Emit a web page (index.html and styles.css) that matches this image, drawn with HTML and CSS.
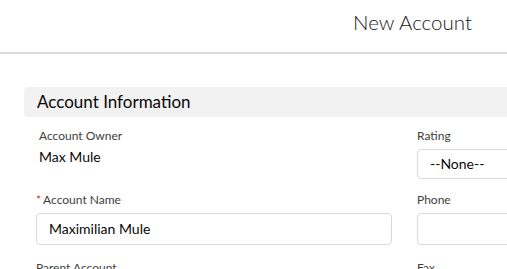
FILE: index.html
```html
<!DOCTYPE HTML>
<html>
    <head>
        <link rel="stylesheet" href="styles.css">
    </head>

    <body>
        <div class="modal">
            <div class="modal-header">
                <h2 class="modal-title">New Account</h2>
            </div>
            <div class="modal-body">
                <h3 class="section-title">Account Information</h3>
                <div class="form">
                    <div class="field static">
                        <div class="label">Account Owner</div>
                        <div class="value">Max Mule</div>
                    </div>
                    <div class="field">
                        <div class="label">Rating</div>
                        <div class="select">--None--</div>
                    </div>
                    <div class="field">
                        <div class="label"><abbr class="required">*</abbr>Account Name</div>
                        <div class="input">Maximilian Mule</div>
                    </div>
                    <div class="field">
                        <div class="label">Phone</div>
                        <div class="input"></div>
                    </div>
                    <div class="field">
                        <div class="label">Parent Account</div>
                        <div class="input"></div>
                    </div>
                    <div class="field">
                        <div class="label">Fax</div>
                        <div class="input"></div>
                    </div>
                </div>
            </div>
        </div>
    </body>
</html>
```

FILE: styles.css
```css
html, body{
    margin: 0;
    overflow: hidden;
    background: #fff;
}

body{
    font-family: Lato, "Open Sans", sans-serif;
    color: #080707;
}

.modal{
    width: 825px;
}

.modal-header{
    height: 52px;
    border-bottom: 2px solid #dddbda;
    text-align: center;
}

.modal-title{
    margin: 0;
    padding-top: 10px;
    font-size: 20.5px;
    font-weight: 300;
    line-height: 24px;
    color: #181818;
}

.modal-body{
    padding: 33px 24px;
}

.section-title{
    margin: 0;
    height: 30px;
    padding: 0 13px;
    border-radius: 4px;
    background: #f3f2f2;
    font-size: 17px;
    font-weight: 400;
    line-height: 30px;
}

.form{
    display: grid;
    grid-template-columns: 356px 356px;
    column-gap: 25px;
    row-gap: 12px;
    padding: 10px 12px 0;
    align-items: start;
}

.label{
    font-size: 12px;
    line-height: 18px;
    color: #3e3e3c;
    margin-bottom: 4px;
}

.static{
    padding-left: 3px;
}

.static .label{
    margin-bottom: 2px;
}

.value{
    font-size: 14px;
    line-height: 20px;
}

.required{
    color: #c23934;
    text-decoration: none;
    font-size: 12px;
    margin-right: 2px;
}

.input, .select{
    height: 32px;
    box-sizing: border-box;
    border: 1px solid #dddbda;
    border-radius: 4px;
    padding: 0 12px;
    font-size: 14px;
    line-height: 30px;
    background: #fff;
}

.input{
    margin-bottom: 2px;
}

.select{
    height: 30px;
    line-height: 28px;
}
```
